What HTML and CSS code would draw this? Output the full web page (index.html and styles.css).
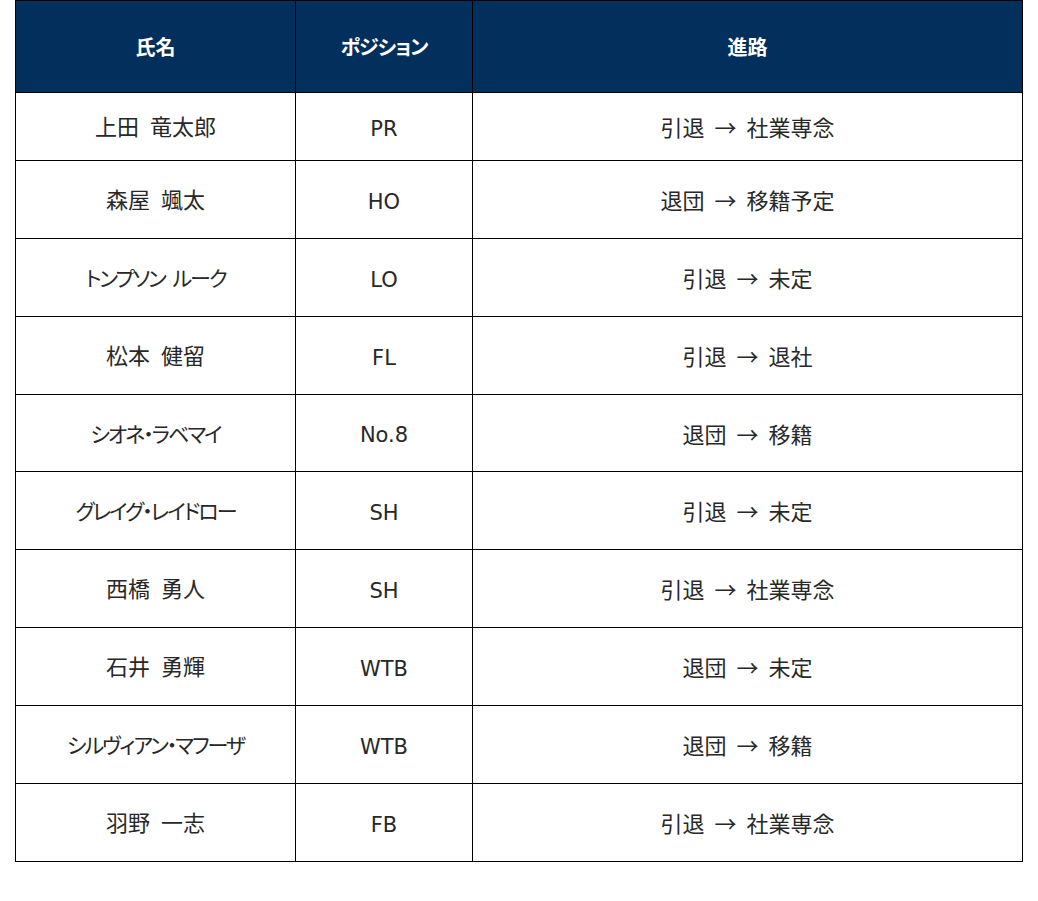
FILE: index.html
```html
<!DOCTYPE html>
<html lang="ja">
<head>
<meta charset="utf-8">
<title>進路一覧</title>
<link rel="stylesheet" href="styles.css">
</head>
<body>
<table class="roster">
  <colgroup>
    <col class="c-name">
    <col class="c-pos">
    <col class="c-path">
  </colgroup>
  <thead>
    <tr class="head-row">
      <th>氏名</th>
      <th class="head-kana">ポジション</th>
      <th>進路</th>
    </tr>
  </thead>
  <tbody>
    <tr class="row-short"><td class="name">上田 竜太郎</td><td class="pos">PR</td><td class="path">引退<span class="arrow">→</span>社業専念</td></tr>
    <tr><td class="name">森屋 颯太</td><td class="pos">HO</td><td class="path">退団<span class="arrow">→</span>移籍予定</td></tr>
    <tr><td class="name kana">トンプソン ルーク</td><td class="pos">LO</td><td class="path">引退<span class="arrow">→</span>未定</td></tr>
    <tr><td class="name">松本 健留</td><td class="pos">FL</td><td class="path">引退<span class="arrow">→</span>退社</td></tr>
    <tr class="row-77"><td class="name kana">シオネ・ラベマイ</td><td class="pos">No.8</td><td class="path">退団<span class="arrow">→</span>移籍</td></tr>
    <tr><td class="name kana">グレイグ・レイドロー</td><td class="pos">SH</td><td class="path">引退<span class="arrow">→</span>未定</td></tr>
    <tr><td class="name">西橋 勇人</td><td class="pos">SH</td><td class="path">引退<span class="arrow">→</span>社業専念</td></tr>
    <tr><td class="name">石井 勇輝</td><td class="pos">WTB</td><td class="path">退団<span class="arrow">→</span>未定</td></tr>
    <tr><td class="name kana">シルヴィアン・マフーザ</td><td class="pos">WTB</td><td class="path">退団<span class="arrow">→</span>移籍</td></tr>
    <tr><td class="name">羽野 一志</td><td class="pos">FB</td><td class="path">引退<span class="arrow">→</span>社業専念</td></tr>
  </tbody>
</table>
</body>
</html>
```
FILE: styles.css
```css
html, body {
  margin: 0;
  padding: 0;
  background: #ffffff;
}

.roster {
  margin: 0 0 0 15px;
  width: 1007px;
  table-layout: fixed;
  border-collapse: separate;
  border-spacing: 0;
  border-top: 1px solid #000;
  border-left: 1px solid #000;
  font-family: "DejaVu Sans", "Noto Sans CJK JP", sans-serif;
  font-size: 22px;
  color: #282828;
}

.c-name { width: 280px; }
.c-pos { width: 177px; }
.c-path { width: 550px; }

.roster th,
.roster td {
  border-right: 1px solid #000;
  border-bottom: 1px solid #000;
  padding: 0;
  text-align: center;
  vertical-align: middle;
  font-weight: normal;
  line-height: 1;
}

.roster td {
  padding-top: 2px;
}

.roster th {
  background: #022f5c;
  color: #ffffff;
  font-weight: bold;
  font-family: "Noto Sans CJK JP", sans-serif;
  font-size: 20px;
}

.head-kana {
  font-feature-settings: "palt";
  letter-spacing: -1px;
}

.name {
  word-spacing: 4px;
}

.roster td.kana {
  font-size: 21px;
  font-feature-settings: "palt";
  letter-spacing: -2px;
  word-spacing: 3px;
  padding-top: 4px;
}

.roster td.pos {
  font-size: 21px;
  padding-top: 5px;
}

.head-row { height: 92px; }
.roster tbody tr { height: 78px; }
.roster tbody tr.row-short { height: 68px; }
.roster tbody tr.row-77 { height: 77px; }

.arrow {
  font-family: "Noto Sans CJK JP", sans-serif;
  margin: 0 10px;
}
```
